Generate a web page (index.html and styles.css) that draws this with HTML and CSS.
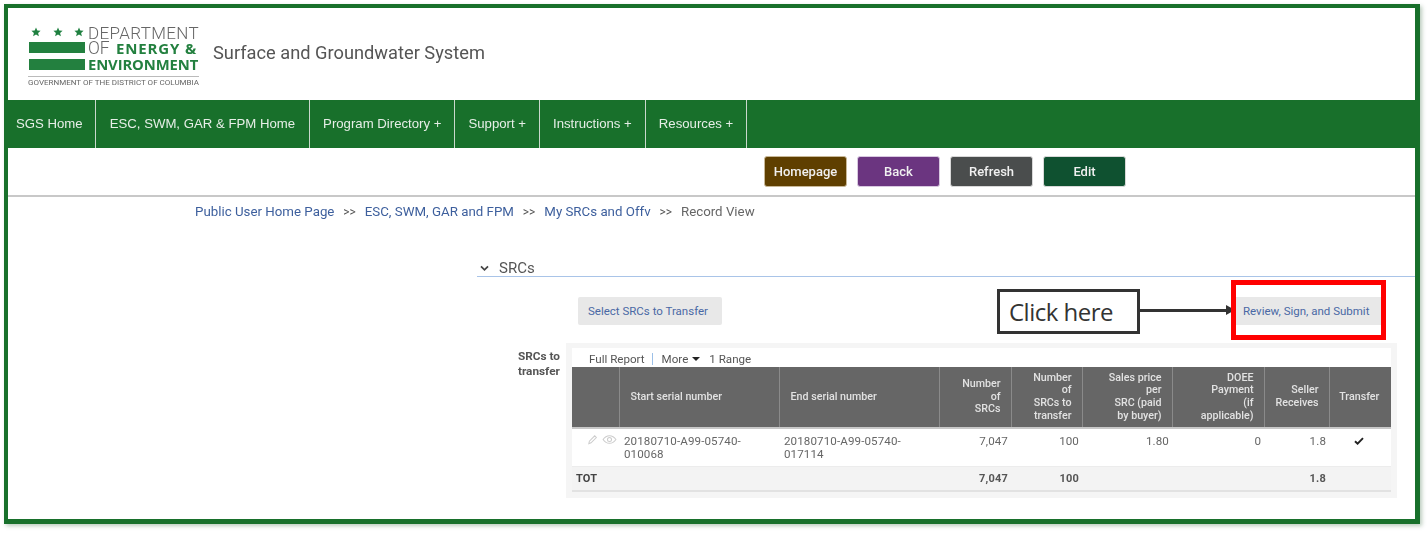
FILE: index.html
```html
<!DOCTYPE html>
<html lang="en">
<head>
<meta charset="utf-8">
<title>Surface and Groundwater System</title>
<link rel="stylesheet" href="styles.css">
</head>
<body>
<div class="frame">
  <header class="site-header">
    <div class="logo">
      <div class="logo-top">
        <div class="logo-flag">
          <div class="logo-stars">
            <svg viewBox="0 0 20 20" class="star"><polygon points="10,1 12.6,7.2 19.2,7.7 14.2,12 15.8,18.6 10,15 4.2,18.6 5.8,12 .8,7.7 7.4,7.2"/></svg>
            <svg viewBox="0 0 20 20" class="star"><polygon points="10,1 12.6,7.2 19.2,7.7 14.2,12 15.8,18.6 10,15 4.2,18.6 5.8,12 .8,7.7 7.4,7.2"/></svg>
            <svg viewBox="0 0 20 20" class="star"><polygon points="10,1 12.6,7.2 19.2,7.7 14.2,12 15.8,18.6 10,15 4.2,18.6 5.8,12 .8,7.7 7.4,7.2"/></svg>
          </div>
          <div class="logo-bar"></div>
          <div class="logo-bar"></div>
        </div>
        <div class="logo-words">
          <div class="logo-dept">DEPARTMENT</div>
          <div class="logo-of">OF <b>ENERGY &amp;</b></div>
          <div class="logo-env">ENVIRONMENT</div>
        </div>
      </div>
      <div class="logo-gov">GOVERNMENT OF THE DISTRICT OF COLUMBIA</div>
    </div>
    <div class="site-title">Surface and Groundwater System</div>
  </header>

  <nav class="main-nav">
    <a class="nav-item nav-first">SGS Home</a>
    <a class="nav-item nav-second">ESC, SWM, GAR &amp; FPM Home</a>
    <a class="nav-item">Program Directory +</a>
    <a class="nav-item">Support +</a>
    <a class="nav-item">Instructions +</a>
    <a class="nav-item">Resources +</a>
  </nav>

  <div class="toolbar">
    <button class="tbtn tbtn-home">Homepage</button>
    <button class="tbtn tbtn-back">Back</button>
    <button class="tbtn tbtn-refresh">Refresh</button>
    <button class="tbtn tbtn-edit">Edit</button>
  </div>

  <div class="crumbs">
    <a>Public User Home Page</a><span class="sep">&gt;&gt;</span><a>ESC, SWM, GAR and FPM</a><span class="sep">&gt;&gt;</span><a>My SRCs and Offv</a><span class="sep">&gt;&gt;</span><span class="crumb-current">Record View</span>
  </div>

  <section class="section">
    <div class="section-head">
      <svg class="chev" viewBox="0 0 10 8"><path d="M1 1.5 5 5.5 9 1.5" fill="none" stroke="#444" stroke-width="2"/></svg>
      <span>SRCs</span>
    </div>
    <div class="actions">
      <button class="gbtn">Select SRCs to Transfer</button>
      <button class="gbtn gbtn-review">Review, Sign, and Submit</button>
      <div class="callout">Click here</div>
      <div class="callout-arrow"></div>
      <div class="red-box"></div>
    </div>
    <div class="report-row">
      <div class="report-label">SRCs to transfer</div>
      <div class="report-panel">
        <div class="report-bar">
          <span>Full Report</span><span class="bar-sep"></span><span>More</span><span class="caret"></span><span class="range">1 Range</span>
        </div>
        <table class="report">
          <colgroup>
            <col class="c0"><col class="c1"><col class="c2"><col class="c3"><col class="c4"><col class="c5"><col class="c6"><col class="c7"><col class="c8">
          </colgroup>
          <thead>
            <tr>
              <th></th>
              <th class="tl">Start serial number</th>
              <th class="tl">End serial number</th>
              <th>Number<br>of<br>SRCs</th>
              <th>Number<br>of<br>SRCs to<br>transfer</th>
              <th>Sales price<br>per<br>SRC (paid<br>by buyer)</th>
              <th>DOEE<br>Payment<br>(if<br>applicable)</th>
              <th>Seller<br>Receives</th>
              <th class="tc">Transfer</th>
            </tr>
          </thead>
          <tbody>
            <tr>
              <td class="icons">
                <svg class="ico" viewBox="0 0 12 12"><path d="M2 10.5 2.6 7.8 8.4 2 10.2 3.8 4.4 9.6Z" fill="none" stroke="#ccc" stroke-width="1.1"/></svg>
                <svg class="ico ico-eye" viewBox="0 0 16 12"><path d="M1 6C3 3 5.300 1.800 8 1.800S13 3 15 6C13 9 10.700 10.200 8 10.200S3 9 1 6Z" fill="none" stroke="#ccc" stroke-width="1.100"/><circle cx="8" cy="6" r="2.200" fill="none" stroke="#ccc" stroke-width="1.100"/></svg>
              </td>
              <td class="tl">20180710-A99-05740-<br>010068</td>
              <td class="tl">20180710-A99-05740-<br>017114</td>
              <td>7,047</td>
              <td>100</td>
              <td>1.80</td>
              <td>0</td>
              <td>1.8</td>
              <td class="tc cell-check"><svg class="check" viewBox="0 0 10 8"><path d="M1 4.200 3.600 6.700 9 1.200" fill="none" stroke="#222" stroke-width="1.900"/></svg></td>
            </tr>
          </tbody>
          <tfoot>
            <tr>
              <td class="tl tot" colspan="3">TOT</td>
              <td>7,047</td>
              <td>100</td>
              <td></td>
              <td></td>
              <td>1.8</td>
              <td></td>
            </tr>
          </tfoot>
        </table>
      </div>
    </div>
  </section>
</div>
</body>
</html>
```
FILE: styles.css
```css
* { box-sizing: border-box; }
html, body { margin: 0; padding: 0; background: #fff; }
body { width: 1428px; height: 533px; overflow: hidden; font-family: Roboto, "Liberation Sans", sans-serif; color: #555; }

.frame {
  margin: 4px 0 0 4px;
  width: 1416px;
  height: 520px;
  border: solid #18702b;
  border-width: 4px 5px 5px 4px;
  box-shadow: 2px 2px 4px rgba(60, 110, 70, .35);
  background: #fff;
  overflow: hidden;
  filter: blur(.45px);
}

.site-header { height: 92px; display: flex; align-items: center; padding-left: 20px; }
.logo { width: 171px; margin-top: 3px; }
.logo-top { display: flex; gap: 3px; padding-left: 1px; }
.logo-flag { width: 56px; padding-top: 3px; }
.logo-stars { display: flex; justify-content: space-between; padding: 0 1px 0 2px; height: 15px; }
.star { width: 10px; height: 10px; fill: #1f8040; }
.logo-bar { height: 11px; background: #23803f; margin-bottom: 6px; }
.logo-words { flex: 1; padding-top: 1px; font-family: "Open Sans", sans-serif; white-space: nowrap; }
.logo-dept { font-size: 17px; line-height: 16px; color: #666; font-family: Roboto, sans-serif; font-weight: 300; letter-spacing: .35px; }
.logo-of { font-size: 17.5px; line-height: 15.500px; color: #666; font-family: Roboto, sans-serif; font-weight: 300; }
.logo-of b { margin-left: 2px; color: #23803f; font-weight: 700; font-family: "Open Sans", sans-serif; font-size: 15px; letter-spacing: .85px; }
.logo-env { font-size: 14.800px; line-height: 16px; color: #23803f; font-weight: 700; letter-spacing: -.1px; }
.logo-gov { border-top: 1px solid #bbb; margin-top: 0; padding-top: 1px; font-size: 8.030px; line-height: 10px; color: #666; white-space: nowrap; font-family: Roboto, sans-serif; }
.site-title { margin-left: 14px; margin-top: -3px; font-size: 18.250px; color: #555; }

.main-nav { height: 48px; background: #18702b; display: flex; }
.nav-item { display: flex; align-items: center; padding: 0 13px; border-right: 1px solid #c9d8cc; color: #e6eee7; font: 13.200px "Liberation Sans", Arial, sans-serif; white-space: nowrap; padding-bottom: 1px; }
.nav-first { padding: 0 12px 1px 8px; }
.nav-second { padding: 0 14px 1px; }

.toolbar { height: 49px; border-bottom: 2px solid #c8c8c8; display: flex; gap: 10px; padding: 8px 0 0 756px; }
.tbtn { width: 83px; height: 31px; border: 1px solid #d8d8d8; border-radius: 3px; color: #f0f0f0; font: 500 13px Roboto, sans-serif; padding: 0; }
.tbtn-home { background: #5f3f00; border-color: #c8b898; }
.tbtn-back { background: #6b3580; border-color: #d8c8e0; }
.tbtn-refresh { background: #4a4d4d; }
.tbtn-edit { background: #0f5130; }

.crumbs { padding: 7px 0 0 187px; height: 30px; font-size: 13.300px; line-height: 16px; white-space: nowrap; }
.crumbs a { color: #3d5f9d; }
.crumbs .sep { margin: 0 8.900px; font-size: 12px; color: #555; }
.crumb-current { color: #666; }

.section { margin: 0 0 0 469px; }
.section-head { height: 50px; border-bottom: 1px solid #a9c4e8; padding: 32px 0 0 3px; display: flex; align-items: flex-start; font-size: 15px; line-height: 19px; color: #555; }
.chev { width: 9px; height: 7px; margin: 6px 10px 0 0; }

.actions { position: relative; height: 66px; display: flex; justify-content: space-between; padding: 20px 34px 0 101px; }
.gbtn { height: 28px; padding: 0 0 0 10px; width: 144px; text-align: left; background: #e8e8e8; border: 0; border-radius: 2px; color: #4a68a5; font: 11.500px Roboto, sans-serif; white-space: nowrap; }
.gbtn-review { padding: 0 0 0 7px; width: 145px; border-radius: 0; }
.callout { position: absolute; left: 520px; top: 12px; width: 143px; height: 45px; border: 3px solid #333; background: #fff; font: 24px/39px "Open Sans", sans-serif; color: #333; padding-left: 9px; letter-spacing: -.5px; }
.callout-arrow { position: absolute; left: 663px; top: 32px; width: 88px; height: 3px; background: #333; }
.callout-arrow::after { content: ""; position: absolute; right: -7px; top: -4px; border-left: 9px solid #333; border-top: 5px solid transparent; border-bottom: 5px solid transparent; }
.red-box { position: absolute; left: 754px; top: 3px; width: 155px; height: 60px; border: 5px solid #f00; }

.report-row { display: flex; padding-left: 41px; }
.report-label { width: 48px; padding-top: 6px; font-size: 11.800px; font-weight: 700; line-height: 15px; color: #555; }
.report-panel { width: 831px; height: 155px; background: #f5f5f5; padding: 5px 6px 0; }
.report-bar { height: 19px; background: #fff; display: flex; align-items: center; padding: 3px 0 0 17px; font-size: 11.600px; color: #555; }
.bar-sep { width: 1px; height: 12px; background: #9cc0e8; margin: 0 9px 0 7px; }
.caret { margin-left: 4px; border-top: 4px solid #222; border-left: 4px solid transparent; border-right: 4px solid transparent; }
.range { margin-left: 9px; }

.report { width: 819px; table-layout: fixed; border-collapse: collapse; font-size: 11px; }
.c0 { width: 47px; } .c1 { width: 160px; } .c2 { width: 160px; } .c3 { width: 72px; } .c4 { width: 71px; } .c5 { width: 90px; } .c6 { width: 92px; } .c7 { width: 65px; } .c8 { width: 62px; }
.report th { height: 61px; background: #666; color: #e2e2e2; font-weight: 500; font-size: 10.700px; line-height: 12.700px; text-align: right; padding: 0 10px 0 4px; border-left: 1px solid #8a8a8a; border-bottom: 2px solid #c8c8c8; }
.report th:first-child { border-left: 0; }
.report th.tl { text-align: left; padding-left: 11px; }
.report th.tc, .report td.tc { text-align: center; padding: 0 2px 0 0; }
.report tbody td { height: 38px; background: #fff; vertical-align: top; text-align: right; padding: 6px 3px 0 5px; font-size: 11.600px; line-height: 13px; color: #666; letter-spacing: .1px; }
.report tbody td.tl { text-align: left; }
.report tbody td.icons { padding: 5px 2px 0 0; white-space: nowrap; }
.report tbody td.cell-check { padding-top: 8px; }
.ico { width: 11px; height: 11px; vertical-align: top; }
.ico-eye { width: 15px; margin-left: 1px; }
.check { width: 10px; height: 8px; vertical-align: top; }
.report tfoot td { height: 25px; background: #f3f3f3; border-top: 1px solid #ececec; border-bottom: 2px solid #e2e2e2; text-align: right; padding: 1px 3px 0 4px; font-weight: 700; font-size: 11px; color: #555; letter-spacing: .2px; }
.report tfoot td.tot { text-align: left; color: #444; }
```
